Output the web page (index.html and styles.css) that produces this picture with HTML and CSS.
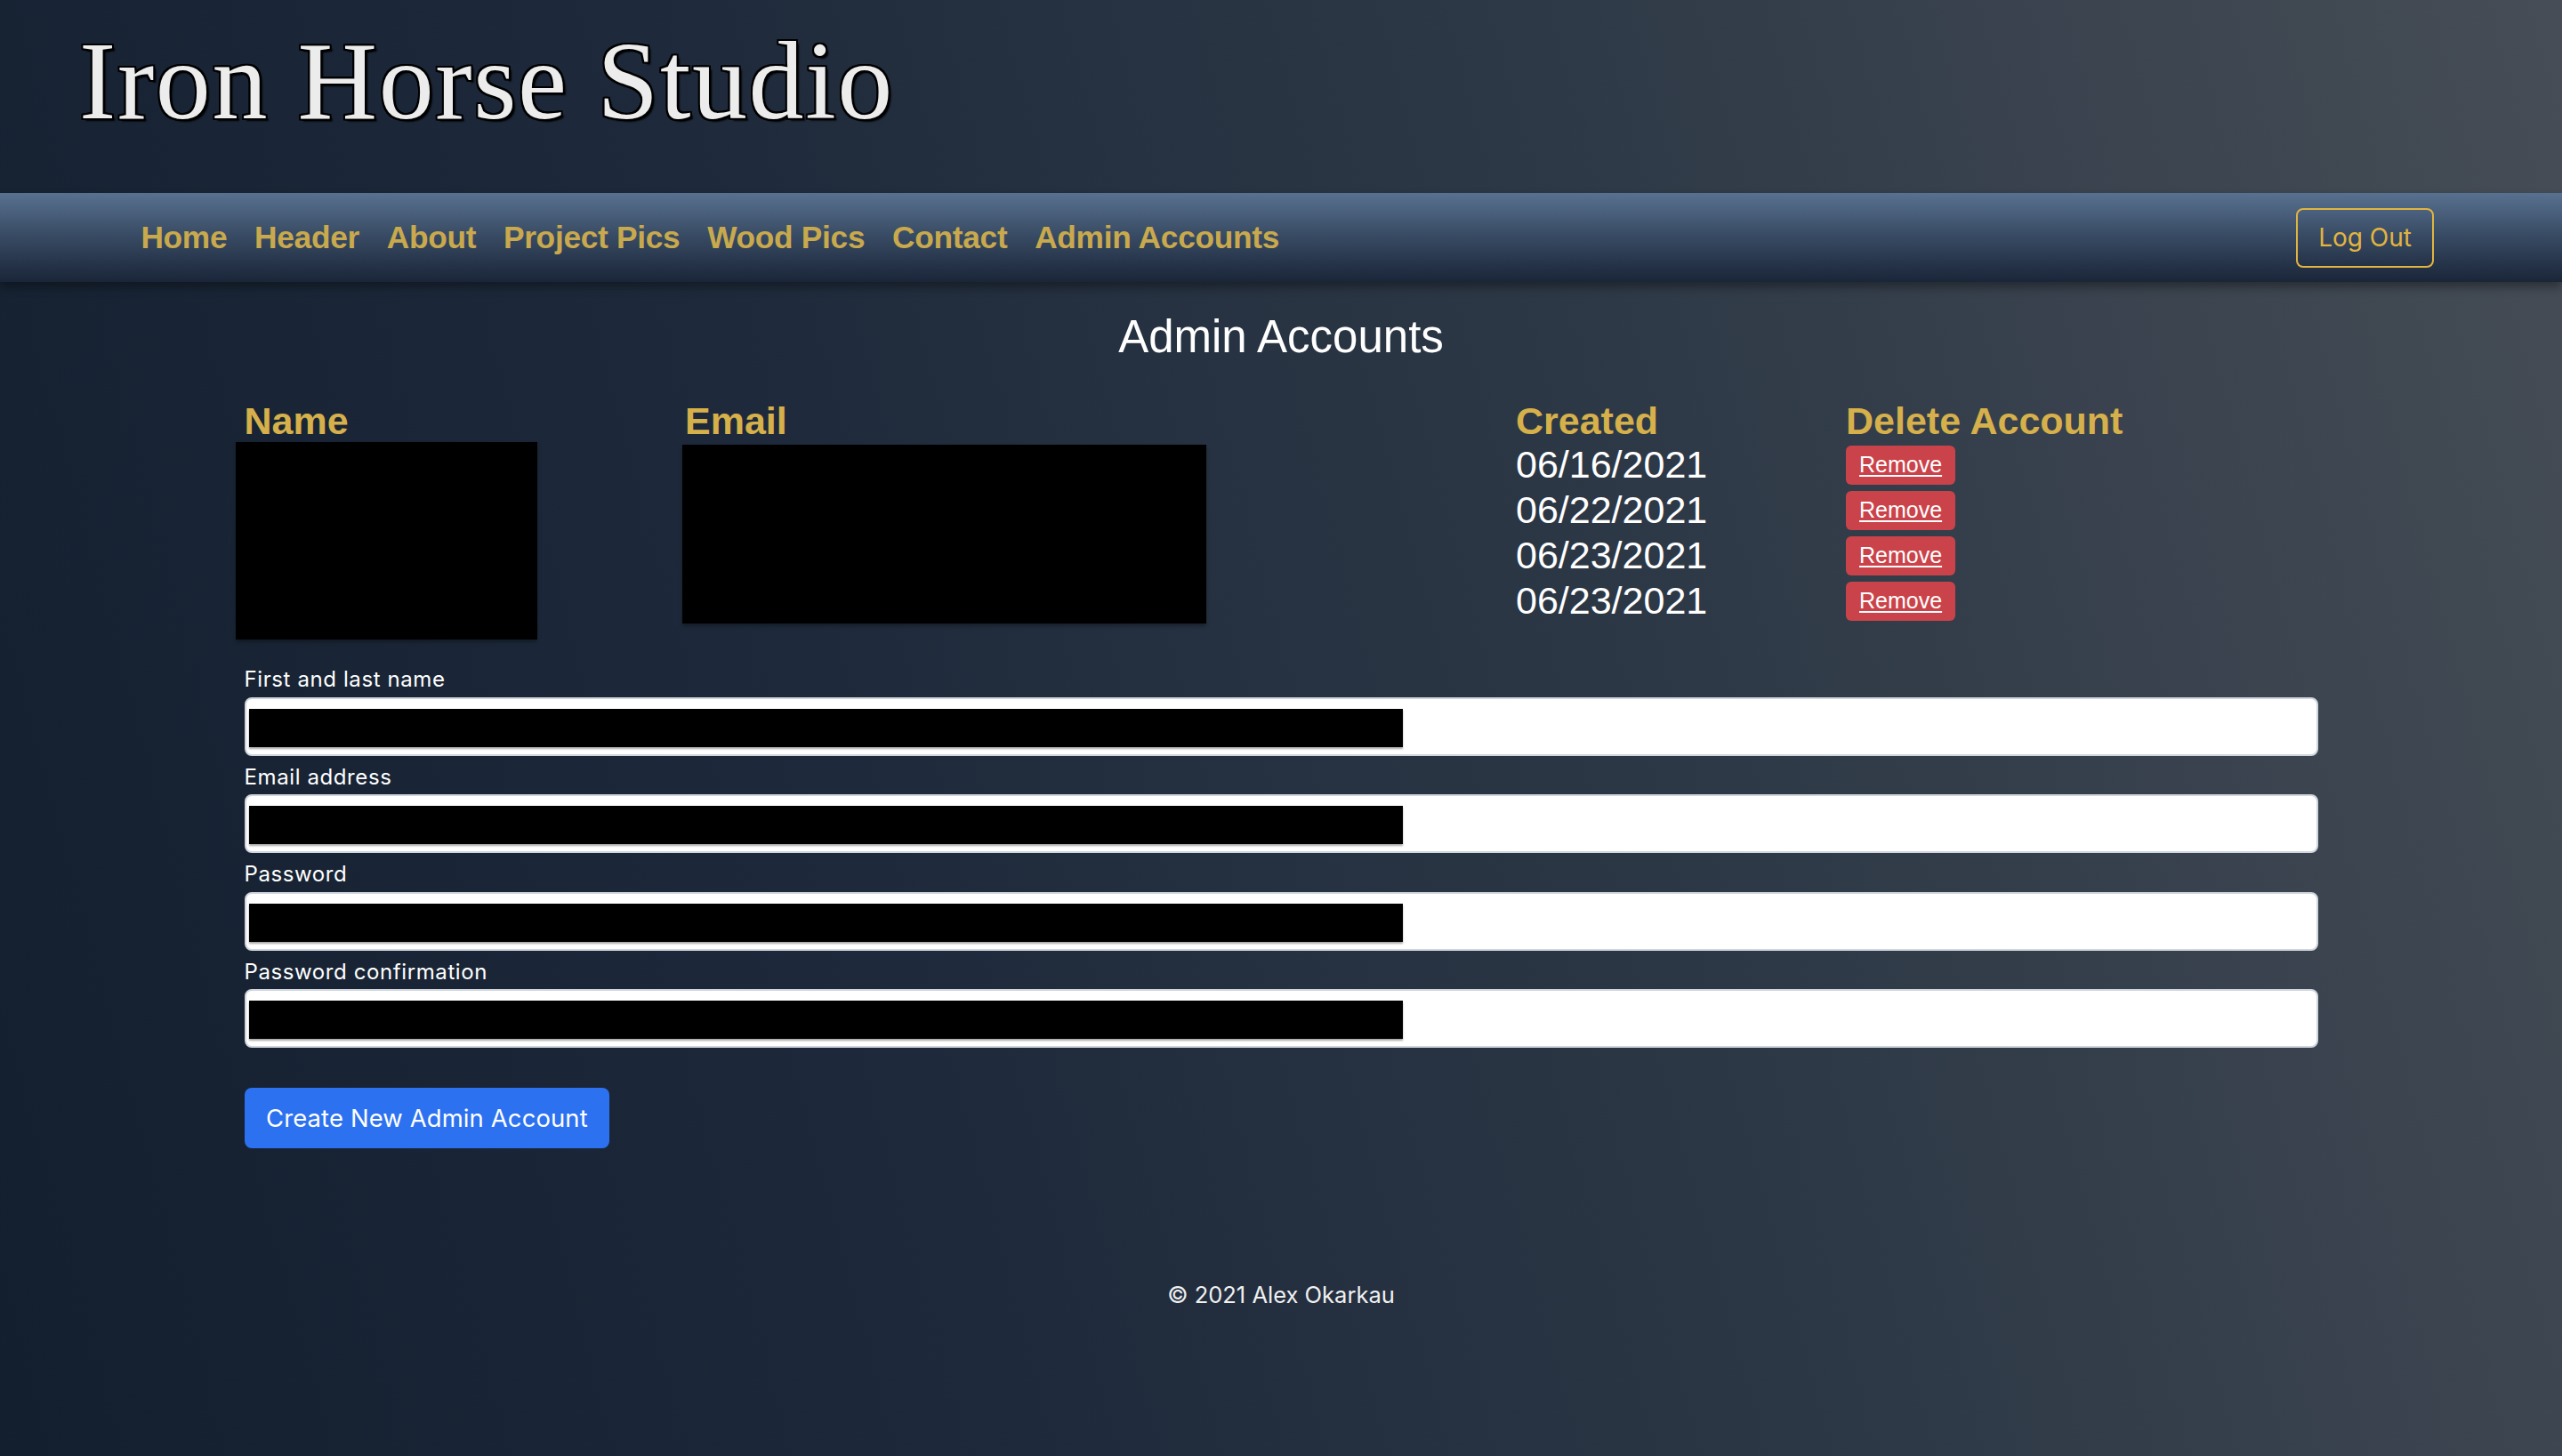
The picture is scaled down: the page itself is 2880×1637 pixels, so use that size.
FILE: index.html
```html
<!DOCTYPE html>
<html lang="en">
<head>
<meta charset="utf-8">
<title>Iron Horse Studio - Admin Accounts</title>
<link rel="stylesheet" href="styles.css">
</head>
<body>
<header class="site-header">
  <h1 class="brand">Iron Horse Studio</h1>
</header>
<nav class="topnav">
  <div class="nav-links">
    <a class="nav-link" href="#">Home</a>
    <a class="nav-link" href="#">Header</a>
    <a class="nav-link" href="#">About</a>
    <a class="nav-link" href="#">Project Pics</a>
    <a class="nav-link" href="#">Wood Pics</a>
    <a class="nav-link" href="#">Contact</a>
    <a class="nav-link" href="#">Admin Accounts</a>
  </div>
  <a class="btn-logout" href="#">Log Out</a>
</nav>
<main class="container">
  <h2 class="page-title">Admin Accounts</h2>
  <div class="accounts">
    <div class="th">Name</div>
    <div class="th">Email</div>
    <div class="th">Created</div>
    <div class="th">Delete Account</div>
    <div class="cell-name"><div class="redact redact-name"></div></div>
    <div class="cell-email"><div class="redact redact-email"></div></div>
    <div class="date">06/16/2021</div>
    <div class="del"><a class="btn-remove" href="#">Remove</a></div>
    <div class="date">06/22/2021</div>
    <div class="del"><a class="btn-remove" href="#">Remove</a></div>
    <div class="date">06/23/2021</div>
    <div class="del"><a class="btn-remove" href="#">Remove</a></div>
    <div class="date">06/23/2021</div>
    <div class="del"><a class="btn-remove" href="#">Remove</a></div>
  </div>
  <form class="admin-form">
    <label class="form-label">First and last name</label>
    <div class="field"><div class="redact-bar"></div></div>
    <label class="form-label">Email address</label>
    <div class="field"><div class="redact-bar"></div></div>
    <label class="form-label">Password</label>
    <div class="field"><div class="redact-bar"></div></div>
    <label class="form-label">Password confirmation</label>
    <div class="field"><div class="redact-bar"></div></div>
    <button class="btn-primary" type="button">Create New Admin Account</button>
  </form>
</main>
<footer class="site-footer">© 2021 Alex Okarkau</footer>
</body>
</html>
```
FILE: styles.css
```css
html {
  height: 100%;
}
body {
  margin: 0;
  min-height: 100%;
  background: linear-gradient(75deg, #131f2f 0%, #1e2a3b 35%, #2e3947 65%, #464d56 100%);
  font-family: "Liberation Sans", Arial, sans-serif;
  color: #fff;
}

.site-header {
  height: 217px;
  box-sizing: border-box;
  padding: 30px 0 0 89px;
}
.brand {
  margin: 0;
  font-family: "Liberation Serif", "Times New Roman", serif;
  font-weight: 400;
  font-size: 124px;
  line-height: 1;
  letter-spacing: 1.6px;
  color: #ececec;
  text-shadow: -2px 0 0 #000, 2px 0 0 #000, 0 -2px 0 #000, 0 2px 0 #000,
    -2px -2px 0 #000, 2px -2px 0 #000, -2px 2px 0 #000, 2px 2px 0 #000,
    3px 3px 2px #000;
}

.topnav {
  height: 100px;
  box-sizing: border-box;
  padding: 0 144px;
  display: flex;
  align-items: center;
  justify-content: space-between;
  background: linear-gradient(to bottom, #587190 0%, #3a4d66 45%, #1a2538 100%);
  box-shadow: 0 6px 10px rgba(0, 0, 0, 0.35);
}
.nav-links {
  display: flex;
  align-items: center;
  margin-left: -1px;
}
.nav-link {
  padding: 0 15.4px;
  font-family: "Liberation Sans", Arial, sans-serif;
  font-weight: 700;
  font-size: 35.3px;
  letter-spacing: -0.3px;
  color: #c9a94d;
  text-decoration: none;
}
.btn-logout {
  display: flex;
  align-items: center;
  justify-content: center;
  height: 67px;
  box-sizing: border-box;
  padding: 0 23px;
  border: 2px solid #e2b440;
  border-radius: 8px;
  font-family: Inter, "Noto Sans", sans-serif;
  font-size: 28px;
  color: #e2b440;
  text-decoration: none;
}

.container {
  width: 2331px;
  margin: 0 auto;
}
.page-title {
  margin: 31px 0 0;
  text-align: center;
  font-weight: 400;
  font-size: 51px;
  line-height: 1.2;
  color: #fff;
}

.accounts {
  margin-top: 40px;
  display: grid;
  grid-template-columns: 495.5px 934px 371px 1fr;
  grid-template-rows: 48px repeat(4, 51px);
}
.th {
  font-weight: 700;
  font-size: 43px;
  line-height: 48px;
  color: #d6b04a;
}
.cell-name {
  grid-column: 1;
  grid-row: 2 / 6;
}
.cell-email {
  grid-column: 2;
  grid-row: 2 / 6;
}
.redact {
  background: #000;
  box-shadow: 0 3px 4px rgba(0, 0, 0, 0.3);
}
.redact-name {
  width: 339px;
  height: 222px;
  margin-left: -9.5px;
  margin-bottom: -18px;
}
.redact-email {
  width: 589px;
  height: 201px;
  margin-left: -3px;
  margin-top: 3px;
}
.date {
  font-size: 43px;
  line-height: 51px;
  color: #fff;
}
.del {
  display: flex;
  align-items: center;
}
.btn-remove {
  display: inline-flex;
  align-items: center;
  height: 44px;
  padding: 0 15px;
  border-radius: 6px;
  background: #cb434a;
  font-size: 25px;
  color: #fff;
  text-decoration: underline;
  text-underline-offset: 3px;
}

.admin-form {
  margin-top: 47px;
}
.form-label {
  display: block;
  margin-bottom: 4px;
  font-family: Inter, "Noto Sans", sans-serif;
  font-size: 24px;
  letter-spacing: 0.6px;
  line-height: 31.5px;
  color: #fff;
}
.field {
  height: 66px;
  box-sizing: border-box;
  margin-bottom: 8px;
  padding: 11px 0 0 3px;
  border: 2px solid #cfd6dd;
  border-radius: 8px;
  background: #fff;
}
.redact-bar {
  width: 1297px;
  height: 43px;
  background: #000;
  box-shadow: 0 2px 2px rgba(0, 0, 0, 0.35);
}
.btn-primary {
  display: inline-flex;
  align-items: center;
  height: 68px;
  margin-top: 36.5px;
  padding: 0 24.5px;
  border: none;
  border-radius: 8px;
  background: #2c71f0;
  font-family: Inter, "Noto Sans", sans-serif;
  font-size: 27.4px;
  letter-spacing: 0.15px;
  color: #fff;
}

.site-footer {
  padding: 145px 0 40px;
  text-align: center;
  font-family: Inter, "Noto Sans", sans-serif;
  font-size: 25.5px;
  line-height: 39px;
  color: #f0f0f0;
}
```
